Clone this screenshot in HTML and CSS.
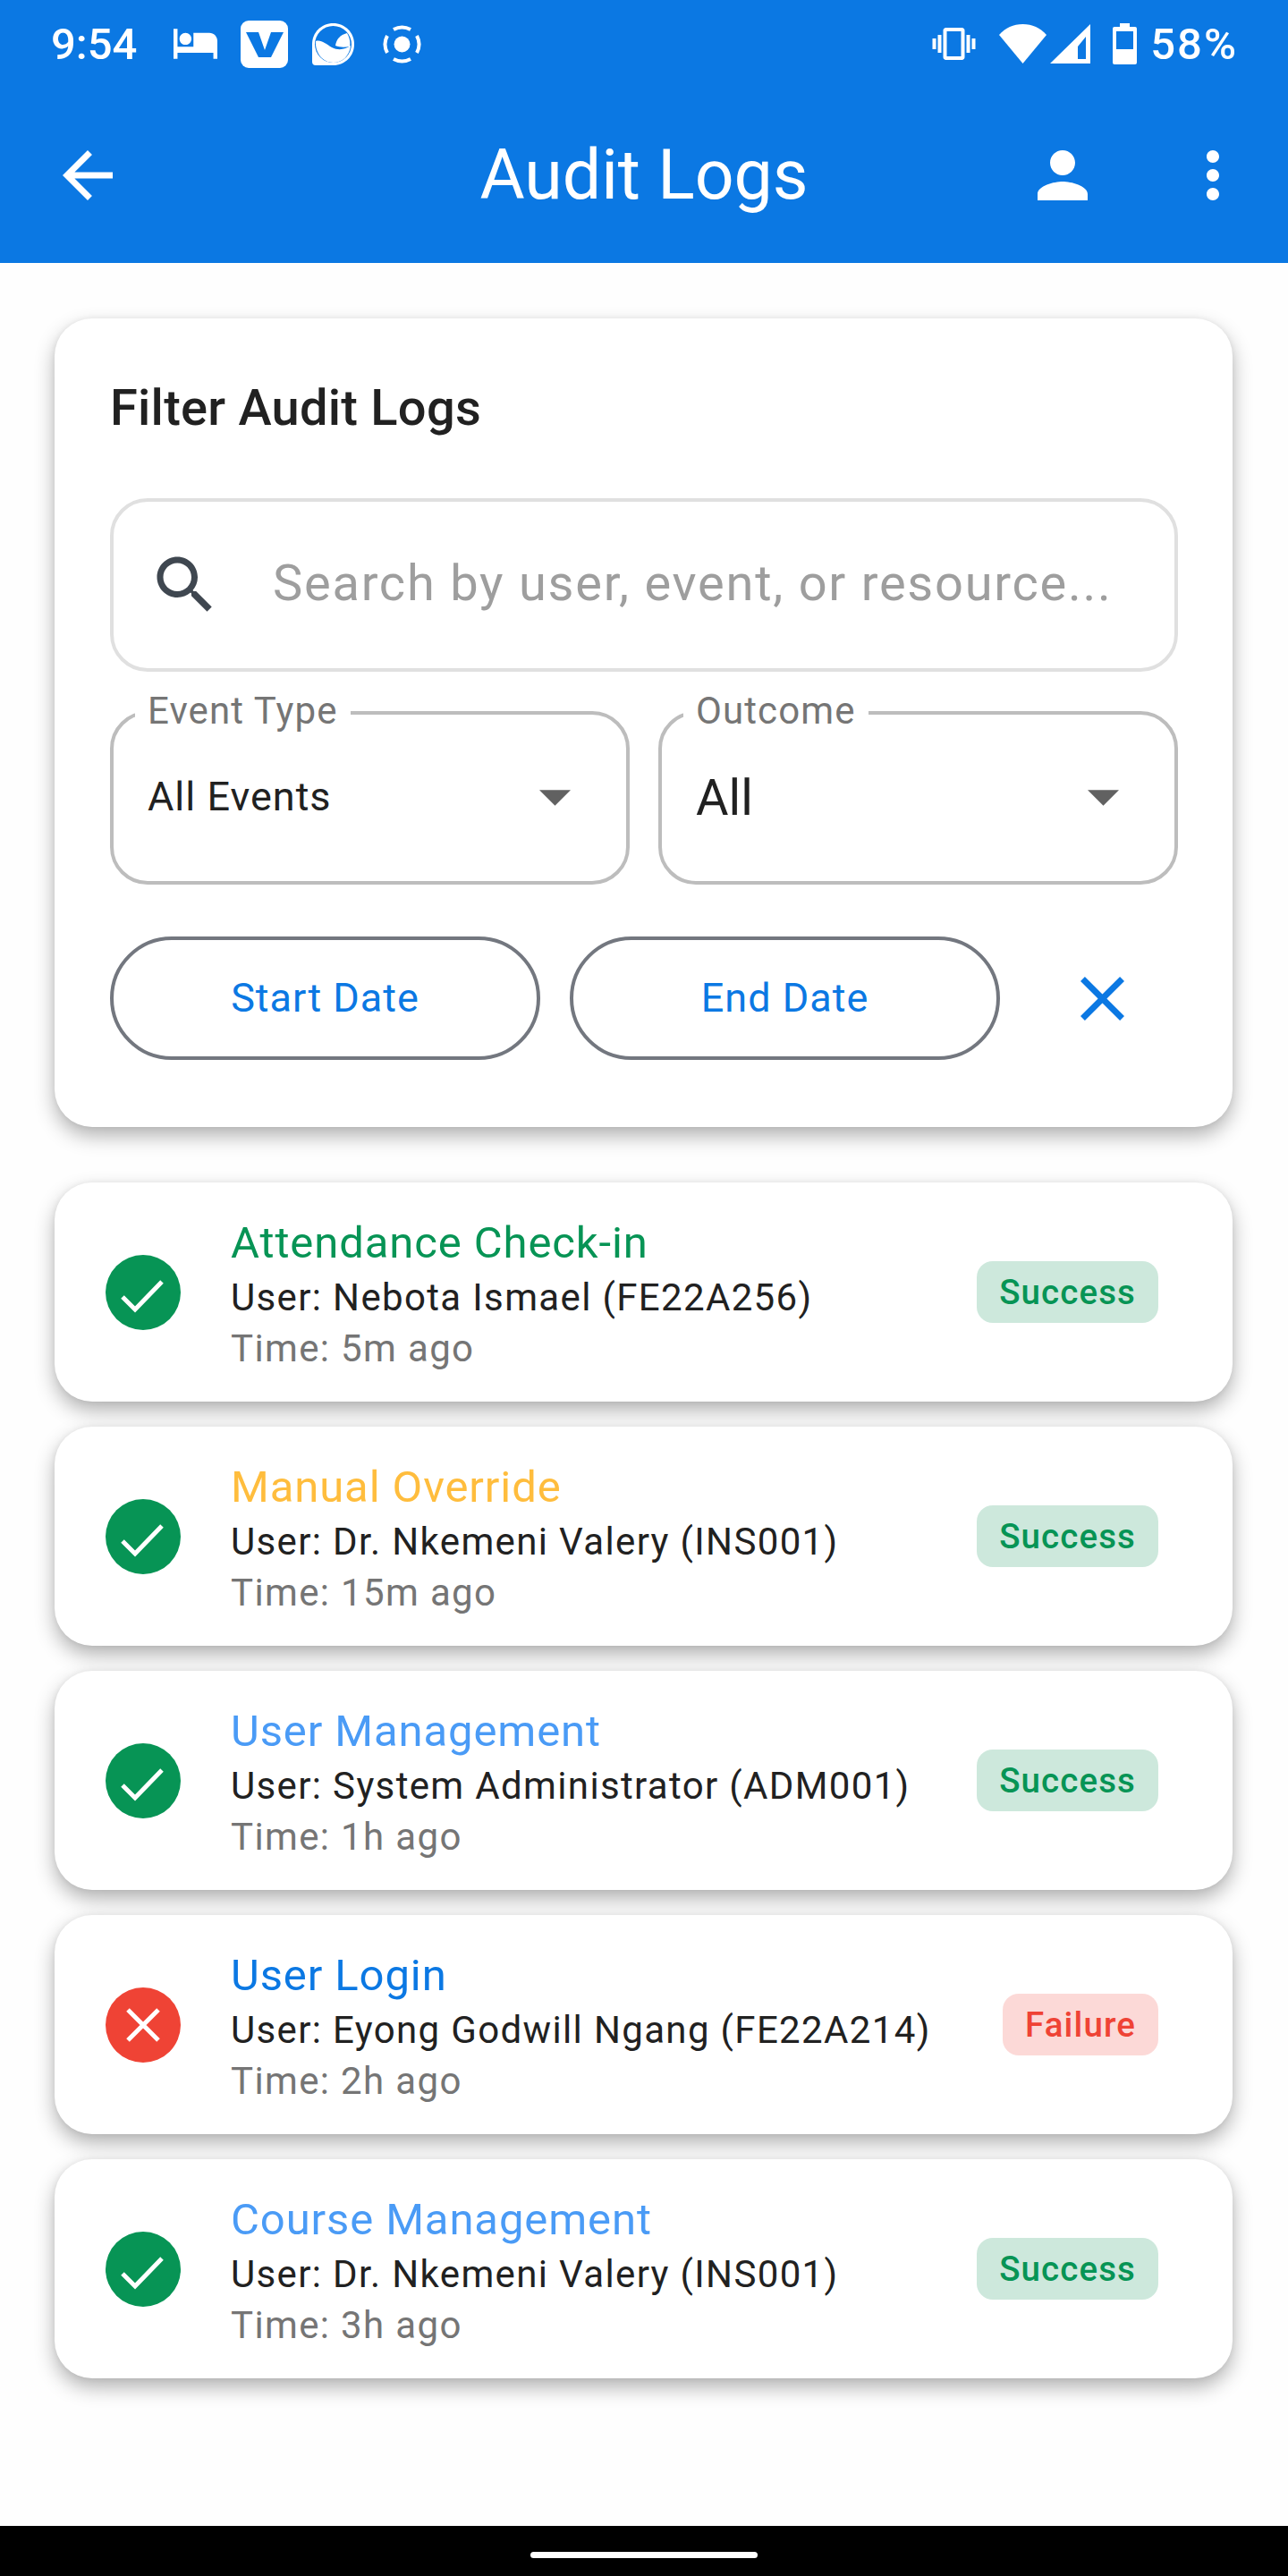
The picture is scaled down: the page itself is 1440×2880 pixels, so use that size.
FILE: index.html
```html
<!DOCTYPE html>
<html lang="en">
<head>
    <meta charset="UTF-8">
    <title>Audit Logs</title>
    <link rel="stylesheet" href="styles.css">
</head>
<body>
<div class="phone">
    <header class="top">
        <div class="status">
            <span class="clock">9:54</span>
            <svg class="st-bed" viewBox="1 5 22 15"><path fill="#fff" d="M7 13c1.66 0 3-1.34 3-3S8.66 7 7 7s-3 1.34-3 3 1.34 3 3 3zm12-6h-8v7H3V5H1v15h2v-3h18v3h2v-9c0-2.21-1.79-4-4-4z"/></svg>
            <svg class="st-v" viewBox="0 0 53 53"><rect width="53" height="53" rx="9" fill="#fff"/><path fill="#0b78e3" d="M6 13h14l7 20 7-20h14L34 41H20z"/></svg>
            <svg class="st-logo" viewBox="0 0 47 47"><path fill="#fff" d="M23.500 0C36.500 0 47 10 47 23.500S36.500 47 23.500 47H4a4 4 0 0 1-4-4V23.500C0 10 10.500 0 23.500 0z"/><circle cx="23.500" cy="23.500" r="20.500" fill="#0b78e3"/><path fill="#fff" d="M4 20c6-2 11 3 18 7 8 4 15 2 21-2-1 11-9 19-19.500 19C12 44 3 33 4 20z"/><path fill="#fff" d="M26 25c1-7 5-12 13-14 3 5 4 11 3 15-6 1-11 1-16-1z"/></svg>
            <svg class="st-ring" viewBox="0 0 45 45"><circle cx="22.500" cy="22.500" r="9" fill="#fff"/><g fill="none" stroke="#fff" stroke-width="4"><path d="M13 6a20 20 0 0 1 19 0"/><path d="M13 39a20 20 0 0 0 19 0"/><path d="M6 13a20 20 0 0 0 0 19"/><path d="M39 13a20 20 0 0 1 0 19"/></g></svg>
            <span class="status-gap"></span>
            <svg class="st-vib" viewBox="0 3 24 18"><path fill="#fff" d="M0 15h2V9H0v6zm3 2h2V7H3v10zm19-8v6h2V9h-2zm-3 8h2V7h-2v10zM16.500 3h-9C6.670 3 6 3.670 6 4.500v15c0 .83.670 1.500 1.500 1.500h9c.83 0 1.500-.67 1.500-1.500v-15c0-.83-.67-1.500-1.500-1.500zM16 19H8V5h8v14z"/></svg>
            <svg class="st-wifi" viewBox="0 0 53 44"><path fill="#fff" d="M0 12C7 4 16 0 26.500 0S46 4 53 12L26.500 44z"/></svg>
            <svg class="st-signal" viewBox="0 0 45 44"><path fill="#fff" fill-rule="evenodd" d="M45 0v44H0zM40 14l-9 11v14h9z"/></svg>
            <svg class="st-batt" viewBox="0 0 27 46"><path fill="#fff" fill-rule="evenodd" d="M8 0h11v4h6a2 2 0 0 1 2 2v38a2 2 0 0 1-2 2H2a2 2 0 0 1-2-2V6a2 2 0 0 1 2-2h6zM4 9v20h19V9z"/></svg>
            <span class="percent">58%</span>
        </div>
        <div class="bar">
            <svg class="bar-back" viewBox="0 0 24 24"><path fill="#fff" d="M20 11H7.830l5.590-5.590L12 4l-8 8 8 8 1.410-1.410L7.830 13H20v-2z"/></svg>
            <h1 class="bar-title">Audit Logs</h1>
            <div class="bar-actions">
                <svg class="bar-icon" viewBox="0 0 24 24"><path fill="#fff" d="M12 12c2.210 0 4-1.790 4-4s-1.790-4-4-4-4 1.790-4 4 1.790 4 4 4zm0 2c-2.670 0-8 1.340-8 4v2h16v-2c0-2.660-5.330-4-8-4z"/></svg>
                <svg class="bar-icon" viewBox="0 0 24 24"><path fill="#fff" d="M12 8c1.100 0 2-.9 2-2s-.9-2-2-2-2 .9-2 2 .9 2 2 2zm0 2c-1.100 0-2 .9-2 2s.9 2 2 2 2-.9 2-2-.9-2-2-2zm0 6c-1.100 0-2 .9-2 2s.9 2 2 2 2-.9 2-2-.9-2-2-2z"/></svg>
            </div>
        </div>
    </header>

    <main class="content">
        <section class="filter card">
            <h2 class="filter-title">Filter Audit Logs</h2>
            <div class="search">
                <svg class="search-icon" viewBox="0 0 24 24"><path fill="#3f4750" d="M15.500 14h-.79l-.28-.27C15.410 12.590 16 11.110 16 9.500 16 5.910 13.090 3 9.500 3S3 5.910 3 9.500 5.910 16 9.500 16c1.610 0 3.090-.59 4.230-1.570l.27.28v.79l5 4.990L20.490 19l-4.990-5zm-6 0C7.010 14 5 11.990 5 9.500S7.010 5 9.500 5 14 7.010 14 9.500 11.990 14 9.500 14z"/></svg>
                <span class="search-hint">Search by user, event, or resource...</span>
            </div>
            <div class="selects">
                <div class="select">
                    <span class="select-label">Event Type</span>
                    <span class="select-value small">All Events</span>
                    <svg class="select-arrow" viewBox="7 10 10 5"><path fill="#616161" d="M7 10l5 5 5-5z"/></svg>
                </div>
                <div class="select">
                    <span class="select-label">Outcome</span>
                    <span class="select-value">All</span>
                    <svg class="select-arrow" viewBox="7 10 10 5"><path fill="#616161" d="M7 10l5 5 5-5z"/></svg>
                </div>
            </div>
            <div class="dates">
                <div class="pill">Start Date</div>
                <div class="pill">End Date</div>
                <svg class="clear" viewBox="5 5 14 14"><path fill="#0b78e3" d="M19 6.410L17.590 5 12 10.590 6.410 5 5 6.410 10.590 12 5 17.590 6.410 19 12 13.410 17.590 19 19 17.590 13.410 12z"/></svg>
            </div>
        </section>

        <div class="logs">
            <article class="log card">
                <svg class="log-icon" viewBox="0 0 84 84"><circle cx="42" cy="42" r="42" fill="#079455"/><path fill="none" stroke="#fff" stroke-width="5" d="M19 47l14 14 30-31"/></svg>
                <div class="log-text">
                    <div class="log-title green">Attendance Check-in</div>
                    <div class="log-user">User: Nebota Ismael (FE22A256)</div>
                    <div class="log-time">Time: 5m ago</div>
                </div>
                <span class="badge ok">Success</span>
            </article>
            <article class="log card">
                <svg class="log-icon" viewBox="0 0 84 84"><circle cx="42" cy="42" r="42" fill="#079455"/><path fill="none" stroke="#fff" stroke-width="5" d="M19 47l14 14 30-31"/></svg>
                <div class="log-text">
                    <div class="log-title amber">Manual Override</div>
                    <div class="log-user">User: Dr. Nkemeni Valery (INS001)</div>
                    <div class="log-time">Time: 15m ago</div>
                </div>
                <span class="badge ok">Success</span>
            </article>
            <article class="log card">
                <svg class="log-icon" viewBox="0 0 84 84"><circle cx="42" cy="42" r="42" fill="#079455"/><path fill="none" stroke="#fff" stroke-width="5" d="M19 47l14 14 30-31"/></svg>
                <div class="log-text">
                    <div class="log-title sky">User Management</div>
                    <div class="log-user">User: System Administrator (ADM001)</div>
                    <div class="log-time">Time: 1h ago</div>
                </div>
                <span class="badge ok">Success</span>
            </article>
            <article class="log card">
                <svg class="log-icon" viewBox="0 0 84 84"><circle cx="42" cy="42" r="42" fill="#ef4335"/><path fill="none" stroke="#fff" stroke-width="5" d="M25 25l34 34M59 25L25 59"/></svg>
                <div class="log-text">
                    <div class="log-title blue">User Login</div>
                    <div class="log-user">User: Eyong Godwill Ngang (FE22A214)</div>
                    <div class="log-time">Time: 2h ago</div>
                </div>
                <span class="badge bad">Failure</span>
            </article>
            <article class="log card">
                <svg class="log-icon" viewBox="0 0 84 84"><circle cx="42" cy="42" r="42" fill="#079455"/><path fill="none" stroke="#fff" stroke-width="5" d="M19 47l14 14 30-31"/></svg>
                <div class="log-text">
                    <div class="log-title sky">Course Management</div>
                    <div class="log-user">User: Dr. Nkemeni Valery (INS001)</div>
                    <div class="log-time">Time: 3h ago</div>
                </div>
                <span class="badge ok">Success</span>
            </article>
        </div>
    </main>

    <footer class="navbar"><span class="home"></span></footer>
</div>
</body>
</html>
```

FILE: styles.css
```css
html, body {
    margin: 0;
    padding: 0;
}
body {
    font-family: Roboto, "Liberation Sans", sans-serif;
    background-color: #fefefe;
    color: #212121;
}
svg {
    display: block;
    flex: none;
}
.phone {
    display: flex;
    flex-direction: column;
    width: 1440px;
    height: 2880px;
    overflow: hidden;
}

/* blue header */
.top {
    flex: none;
    height: 294px;
    background-color: #0b78e3;
    color: white;
}
.status {
    display: flex;
    align-items: center;
    height: 98px;
    padding: 0 56px 0 57px;
    font-size: 49px;
    font-weight: 500;
}
.clock {
    width: 137px;
}
.st-bed { width: 49px; height: 34px; }
.st-v { width: 53px; height: 53px; margin-left: 26px; }
.st-logo { width: 47px; height: 47px; margin-left: 27px; }
.st-ring { width: 45px; height: 45px; margin-left: 31px; }
.status-gap { flex: 1; }
.st-vib { width: 49px; height: 36px; }
.st-wifi { width: 53px; height: 44px; margin-left: 26px; }
.st-signal { width: 45px; height: 44px; margin-left: 4px; }
.st-batt { width: 27px; height: 46px; margin-left: 25px; }
.percent {
    margin-left: 15px;
    letter-spacing: 2px;
}
.bar {
    display: grid;
    grid-template-columns: 1fr auto 1fr;
    align-items: center;
    height: 196px;
    padding: 0 42px 0 56px;
}
.bar-back { width: 84px; height: 84px; }
.bar-title {
    margin: 0 14px 0 0;
    font-size: 77px;
    font-weight: 400;
    line-height: 84px;
}
.bar-actions {
    display: flex;
    justify-content: flex-end;
    gap: 84px;
}
.bar-icon { width: 84px; height: 84px; }

/* cards */
.card {
    background-color: white;
    border-radius: 42px;
    box-shadow: 0 10px 22px rgba(0,0,0,0.3), 0 0 6px rgba(0,0,0,0.06);
}
.content {
    flex: 1;
    padding: 62px 62px 0 61px;
}
.filter {
    box-sizing: border-box;
    height: 904px;
    padding: 67px 61px 0 62px;
}
.filter-title {
    margin: 0;
    height: 134px;
    font-size: 56px;
    line-height: 66px;
    font-weight: 500;
    letter-spacing: .25px;
    color: #212121;
}
.search {
    box-sizing: border-box;
    display: flex;
    align-items: center;
    height: 194px;
    border: 4px solid #e0e0e0;
    border-radius: 42px;
    padding-left: 38px;
}
.search-icon {
    width: 84px;
    height: 84px;
}
.search-hint {
    margin: 0 0 4px 56px;
    font-size: 56px;
    letter-spacing: 1.75px;
    color: #9e9e9e;
    white-space: nowrap;
}
.selects {
    display: flex;
    gap: 32px;
    margin-top: 44px;
}
.select {
    box-sizing: border-box;
    position: relative;
    flex: 1;
    display: flex;
    align-items: center;
    height: 194px;
    border: 4px solid #bdbdbd;
    border-radius: 42px;
    padding: 0 62px 0 38px;
}
.select-label {
    position: absolute;
    left: 24px;
    top: -29px;
    padding: 0 14px;
    background-color: white;
    font-size: 42px;
    line-height: 50px;
    letter-spacing: 1.1px;
    color: #757575;
}
.select-value {
    flex: 1;
    font-size: 56px;
    color: #212121;
}
.select-value.small {
    margin-bottom: 4px;
    font-size: 45px;
    letter-spacing: 1px;
}
.select-arrow {
    width: 35px;
    height: 18px;
}
.dates {
    display: flex;
    align-items: center;
    gap: 33px;
    margin-top: 58px;
}
.pill {
    box-sizing: border-box;
    width: 481px;
    height: 138px;
    line-height: 130px;
    border: 4px solid #73777f;
    border-radius: 69px;
    text-align: center;
    font-size: 45px;
    letter-spacing: 1px;
    color: #0b78e3;
}
.clear {
    width: 49px;
    height: 49px;
    margin-left: 57px;
}

/* log list */
.logs {
    display: flex;
    flex-direction: column;
    gap: 28px;
    margin-top: 62px;
}
.log {
    box-sizing: border-box;
    display: flex;
    align-items: center;
    height: 245px;
    padding: 0 83px 0 57px;
}
.log-icon {
    width: 84px;
    height: 84px;
}
.log-text {
    flex: 1;
    margin-left: 56px;
    padding-top: 5px;
    white-space: nowrap;
}
.log-title {
    font-size: 49px;
    line-height: 60px;
    letter-spacing: .9px;
}
.log-user {
    font-size: 42px;
    line-height: 62px;
    letter-spacing: 1.35px;
    color: #212121;
}
.log-time {
    font-size: 42px;
    line-height: 52px;
    letter-spacing: 1.35px;
    color: #757575;
}
.green { color: #079455; }
.amber { color: #ffbd3d; }
.sky { color: #4a9bf6; }
.blue { color: #0b78e3; }
.badge {
    padding: 0 25px;
    height: 69px;
    line-height: 69px;
    border-radius: 18px;
    font-size: 38.5px;
    font-weight: 500;
    letter-spacing: 1.1px;
}
.badge.ok {
    background-color: #cde8dc;
    color: #079455;
}
.badge.bad {
    background-color: #fcd9d7;
    color: #ef4335;
}

/* android nav */
.navbar {
    flex: none;
    height: 56px;
    background-color: black;
    display: flex;
    justify-content: center;
    padding-top: 29px;
    box-sizing: border-box;
}
.home {
    width: 254px;
    height: 7px;
    border-radius: 4px;
    background-color: white;
}
```
